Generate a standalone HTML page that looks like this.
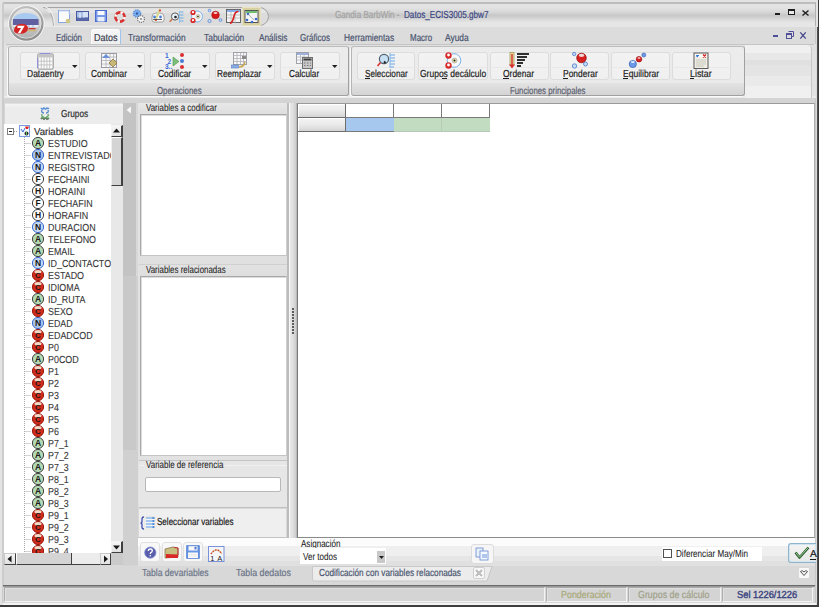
<!DOCTYPE html>
<html><head><meta charset="utf-8">
<style>
*{margin:0;padding:0;box-sizing:border-box}
html,body{width:819px;height:607px;overflow:hidden;background:#d4d4d4;font-family:"Liberation Sans",sans-serif;font-size:9px;color:#000}
.a{position:absolute}
.t{position:absolute;white-space:nowrap;line-height:1;transform-origin:0 0;text-rendering:geometricPrecision;-webkit-text-stroke:0.2px currentColor}
svg{position:absolute;overflow:visible}
</style></head><body>
<div class="a" style="left:0px;top:0px;width:819px;height:607px;background:#e3e3e3"></div>
<div class="a" style="left:3px;top:3px;width:813px;height:602px;background:#d4d4d4"></div>
<div class="a" style="left:3px;top:2px;width:813px;height:2px;background:#bdbdbd"></div>
<div class="a" style="left:2px;top:3px;width:2px;height:600px;background:#cccccc"></div>
<div class="a" style="left:4px;top:4px;width:811px;height:23px;background:linear-gradient(#e4e4e4 0,#e2e2e2 4px,#d8d8d8 8px,#cdcdcd 10px,#c8c8c8 11.5px,#d0d0d0 13.5px,#dcdcdc 16px,#e6e6e6 19px,#e6e6e6 23px)"></div>
<div class="a" style="left:815px;top:3px;width:1px;height:23px;background:#b0b0b0"></div>
<div class="a" style="left:4px;top:27px;width:811px;height:19px;background:#dcdcdc"></div>
<div class="a" style="left:818px;top:0px;width:1px;height:607px;background:#3c3c3c"></div>
<div class="a" style="left:817px;top:27px;width:1px;height:580px;background:#505050"></div>
<div class="a" style="left:815px;top:27px;width:2px;height:578px;background:linear-gradient(90deg,#c8c8c8 50%,#dadada 50%)"></div>
<div class="a" style="left:0px;top:605px;width:819px;height:2px;background:#3c3c3c"></div>
<div class="a" style="left:3px;top:603px;width:813px;height:2px;background:#f4f4f4"></div>
<svg style="left:0;top:0" width="300" height="30"><path d="M43.5 7.5 H259.5 A9 9 0 0 1 259.5 25.5 H53.5 A10 18 0 0 0 43.5 7.5 Z" fill="#dcdcdc"/><path d="M53.5 25.5 A10 18 0 0 0 43.5 7.5 H259.5 A9 9 0 0 1 259.5 25.5" fill="none" stroke="#a4a4a4" stroke-width="1"/><path d="M45 8.5 H259.5 A8 8 0 0 1 266.5 13 H49Z" fill="#e4e4e4"/><path d="M44.5 6.5 A11 19 0 0 1 54.5 25" stroke="#f4f4f4" fill="none" stroke-width="1"/><path d="M54 26.5 H260" stroke="#ececec" stroke-width="1"/></svg>
<svg style="left:7px;top:4px" width="40" height="40" viewBox="0 0 40 40">
<defs><linearGradient id="lg1" x1="0" y1="0" x2="0.3" y2="1"><stop offset="0" stop-color="#c8c8c8"/><stop offset="0.5" stop-color="#a8a8a8"/><stop offset="1" stop-color="#8e8e8e"/></linearGradient>
<linearGradient id="lg2" x1="0" y1="0" x2="0" y2="1"><stop offset="0" stop-color="#e4e4e4"/><stop offset="0.55" stop-color="#cccccc"/><stop offset="1" stop-color="#b0b0b0"/></linearGradient></defs>
<circle cx="19.3" cy="19.4" r="18.2" fill="#f8f8f8"/>
<circle cx="19.3" cy="19.4" r="17.3" fill="url(#lg1)"/>
<circle cx="19.3" cy="19.4" r="14.8" fill="url(#lg2)" stroke="#f0f0f0" stroke-width="0.7"/>
<path d="M6.2 15 Q8 9.5 19 9 Q30 9.5 31.5 15Z" fill="#a8caf0"/>
<rect x="6" y="15" width="25.6" height="6" fill="#6060a0"/>
<rect x="6.5" y="21" width="25" height="2.2" fill="#e4ecf4"/>
<circle cx="22" cy="22" r="0.6" fill="#4a6ad0"/><circle cx="26" cy="22" r="0.6" fill="#4a6ad0"/>
<path d="M7 26 Q8 20 15 19.8 Q21.5 20 21 25 Q20 29.8 13 29.8 Q6.5 29.5 7 26Z" fill="#d42424"/>
<path d="M10.5 21.8h7.2l-4.4 7.4h-2.6l3.4-5.2h-3.6z" fill="#fff"/>
<rect x="21.5" y="24" width="7" height="1.3" fill="#d03030"/><rect x="21" y="26" width="8" height="1.3" fill="#c8b870"/>
</svg>
<svg style="left:57px;top:9px" width="16" height="16" viewBox="0 0 16 16"><rect x="1.5" y="1.5" width="11" height="12" fill="#fafafa" stroke="#8aa8e0"/><path d="M2 2h10v3" stroke="#c8d8f0" fill="none"/><circle cx="11" cy="12" r="2.3" fill="#d0c880"/></svg>
<svg style="left:76px;top:10px" width="16" height="16" viewBox="0 0 16 16"><rect x="0.5" y="1.5" width="12" height="9" fill="#a8c0e8" stroke="#4a5aa0"/><rect x="1" y="7.5" width="11" height="3" fill="#5a6aa8"/><path d="M4 3v5M8 3.5v4" stroke="#f0f4fc" stroke-width="1.2"/><rect x="7" y="2" width="5" height="5" fill="#d8e4f4"/></svg>
<svg style="left:95px;top:10px" width="16" height="16" viewBox="0 0 16 16"><rect x="0.5" y="0.5" width="11" height="11" fill="#7a9ae8" stroke="#4a6ad0"/><rect x="2.5" y="1" width="7" height="4" fill="#fafafa"/><rect x="2.5" y="7" width="7" height="4.5" fill="#e8eef8"/></svg>
<svg style="left:112px;top:9px" width="16" height="16" viewBox="0 0 16 16"><circle cx="8" cy="8" r="4.6" fill="none" stroke="#d83030" stroke-width="2.6"/><circle cx="8" cy="8" r="4.6" fill="none" stroke="#fafafa" stroke-width="2.6" stroke-dasharray="2.4 4.8"/></svg>
<svg style="left:131px;top:8px" width="16" height="16" viewBox="0 0 16 16"><circle cx="6" cy="5.5" r="3.6" fill="#7ab0ec" stroke="#5a8ad8" stroke-width="1.4" stroke-dasharray="1.2 0.9"/><circle cx="6" cy="5.5" r="1.2" fill="#3a5ab0"/><circle cx="10" cy="11" r="3.4" fill="#f4f4f4" stroke="#707070" stroke-width="1.2" stroke-dasharray="1.2 0.9"/><circle cx="10" cy="11" r="1" fill="#888"/></svg>
<svg style="left:150px;top:8px" width="16" height="16" viewBox="0 0 16 16"><path d="M2 9 q0-4 4-4 h4 q4 0 4 4 v3 q0 2-2 2 h-8 q-2 0-2-2z" fill="#f8f8f8" stroke="#909090" stroke-width="0.8"/><path d="M10 1 L5 13" stroke="#d8d890" stroke-width="2"/><circle cx="4.5" cy="9" r="1.4" fill="#4a80d8"/><circle cx="10.5" cy="9" r="1.4" fill="#4a80d8"/><circle cx="10" cy="2.5" r="0.9" fill="#d82020"/><circle cx="6" cy="12" r="0.9" fill="#d82020"/><path d="M3 11.5h9" stroke="#555" stroke-width="0.9"/></svg>
<svg style="left:169px;top:8px" width="16" height="16" viewBox="0 0 16 16"><circle cx="6" cy="8.5" r="3.6" fill="#e8f0f8" stroke="#606060" stroke-width="1"/><circle cx="6.5" cy="9" r="1.3" fill="#222"/><path d="M3.2 11.2l-2.6 2.6" stroke="#c87040" stroke-width="1.4"/><path d="M10.5 3v12" stroke="#8ac0ec" stroke-width="0.8"/><path d="M10.5 4h4M10.5 7h4M10.5 10h4M10.5 13h4" stroke="#6ab0ec" stroke-width="1.1"/></svg>
<svg style="left:188px;top:8px" width="16" height="16" viewBox="0 0 16 16"><circle cx="9" cy="8.5" r="5.5" fill="#f6f6f6" stroke="#7ab4ec" stroke-width="1"/><circle cx="10" cy="8.5" r="2" fill="#e8e0b8" stroke="#999" stroke-width="0.5"/><circle cx="10" cy="8.5" r="0.8" fill="#222"/><circle cx="5" cy="4.5" r="2.6" fill="#d82828"/><circle cx="5" cy="4.2" r="1.1" fill="#fff"/><circle cx="5" cy="12.5" r="2.6" fill="#d82828"/><circle cx="5" cy="12.2" r="1.1" fill="#fff"/></svg>
<svg style="left:206px;top:8px" width="16" height="16" viewBox="0 0 16 16"><circle cx="9.5" cy="7" r="3.8" fill="#d81818" stroke="#a01010" stroke-width="0.6"/><ellipse cx="9.5" cy="5" rx="2" ry="1" fill="#f4d0d0"/><circle cx="3.5" cy="2.5" r="1.3" fill="#c8dcf4" stroke="#4a7ad0" stroke-width="0.7"/><circle cx="3.5" cy="13" r="1.6" fill="#c8dcf4" stroke="#4a7ad0" stroke-width="0.7"/><circle cx="14.5" cy="12" r="1.4" fill="#c8dcf4" stroke="#4a7ad0" stroke-width="0.7"/></svg>
<svg style="left:226px;top:9px" width="16" height="16" viewBox="0 0 16 16"><rect x="0.5" y="0.5" width="14" height="13" fill="#f4f4f4" stroke="#5a5a5a" stroke-width="0.9"/><rect x="1" y="1" width="13" height="2" fill="#8ab0e8"/><path d="M1 6h13M1 9h13M5 3v11M9 3v11" stroke="#b0b0b0" stroke-width="0.7"/><path d="M4 14.5 Q7 13 8 7 Q9 2.5 12.5 2.5" stroke="#d82020" fill="none" stroke-width="1.6"/></svg>
<div class="a" style="left:242px;top:7px;width:19px;height:19px;background:#d6d0a2;border:1px solid #e8e2c0"></div>
<svg style="left:244px;top:9px" width="16" height="16" viewBox="0 0 16 16"><rect x="1" y="1.5" width="13" height="12" fill="#f4f4f4" stroke="#555"/><rect x="2" y="2" width="11" height="2" fill="#70c070"/><circle cx="4" cy="5" r="1.3" fill="#3a6ad0"/><circle cx="3" cy="11" r="1.3" fill="#3a6ad0"/><circle cx="8" cy="13" r="1.3" fill="#3a6ad0"/><circle cx="12" cy="10" r="1.3" fill="#3a6ad0"/><path d="M4 5l6 6" stroke="#888" stroke-width="0.6"/></svg>
<div class="t" style="left:335.00px;top:11px;font-size:10.2px;color:#a2a2a2;transform:scaleX(0.7963);">Gandia BarbWin -</div>
<div class="t" style="left:403.50px;top:11px;font-size:10.2px;color:#3a4684;transform:scaleX(0.7972);">Datos_ECIS3005.gbw7</div>
<div class="a" style="left:775px;top:13px;width:5px;height:2px;background:#1e1e1e"></div>
<div class="a" style="left:788px;top:9px;width:7px;height:6px;border:1px solid #1e1e1e;border-top-width:2px;background:#e8e8e8"></div>
<svg style="left:802px;top:9.5px" width="7" height="6"><path d="M0.5 0.5l6 5M6.5 0.5l-6 5" stroke="#1e1e1e" stroke-width="1.4"/></svg>
<div class="a" style="left:773px;top:35px;width:5px;height:2px;background:#50509a"></div>
<svg style="left:785.5px;top:31px" width="8" height="8"><path d="M2.5 0.5h5v5h-2" fill="none" stroke="#50509a" stroke-width="1"/><rect x="0.5" y="2.5" width="5" height="5" fill="none" stroke="#50509a" stroke-width="1"/><rect x="0.5" y="2.5" width="5" height="1.5" fill="#50509a"/></svg>
<svg style="left:800px;top:31.5px" width="6" height="7"><path d="M0.3 0.3l5.4 6.4M5.7 0.3l-5.4 6.4" stroke="#40408a" stroke-width="1.2"/></svg>
<div class="a" style="left:90px;top:28px;width:31px;height:18px;background:linear-gradient(#f6f6f6,#eeeeee);border:1px solid #d8d8d8;border-bottom:none;border-radius:3px 3px 0 0;border-right-color:#a0c4ec;box-shadow:inset 1px 1px 0 #fcfcfc"></div>
<div class="t" style="left:55.90px;top:34px;font-size:10.2px;color:#4a5470;transform:scaleX(0.7791);">Edición</div>
<div class="t" style="left:94.20px;top:34px;font-size:10.2px;color:#3a4050;transform:scaleX(0.8826);">Datos</div>
<div class="t" style="left:128.40px;top:34px;font-size:10.2px;color:#4a5470;transform:scaleX(0.8170);">Transformación</div>
<div class="t" style="left:203.50px;top:34px;font-size:10.2px;color:#4a5470;transform:scaleX(0.8267);">Tabulación</div>
<div class="t" style="left:258.50px;top:34px;font-size:10.2px;color:#4a5470;transform:scaleX(0.8114);">Análisis</div>
<div class="t" style="left:300.00px;top:34px;font-size:10.2px;color:#4a5470;transform:scaleX(0.7895);">Gráficos</div>
<div class="t" style="left:343.80px;top:34px;font-size:10.2px;color:#4a5470;transform:scaleX(0.8196);">Herramientas</div>
<div class="t" style="left:409.80px;top:34px;font-size:10.2px;color:#4a5470;transform:scaleX(0.7824);">Macro</div>
<div class="t" style="left:444.60px;top:34px;font-size:10.2px;color:#4a5470;transform:scaleX(0.8242);">Ayuda</div>
<div class="a" style="left:4px;top:44px;width:812px;height:54px;background:#e2e2e2"></div>
<div class="a" style="left:6px;top:44px;width:808px;height:1px;background:#c4c4c4"></div>
<div class="a" style="left:4px;top:96px;width:812px;height:2px;background:#ebebeb"></div>
<div class="a" style="left:8px;top:46px;width:341px;height:50px;border:1px solid #a0a0a0;border-top-color:#bcbcbc;border-left-color:#b4b4b4;border-radius:3px;background:linear-gradient(#ececec 0,#eaeaea 74%,#e2e2e2 76%,#d4d4d4 100%);box-shadow:-1px 1px 0 #fafafa"></div>
<div class="t" style="left:156.60px;top:87px;font-size:10.2px;color:#5a6070;transform:scaleX(0.7724);">Operaciones</div>
<div class="a" style="left:351px;top:46px;width:394px;height:50px;border:1px solid #a0a0a0;border-top-color:#bcbcbc;border-left-color:#b4b4b4;border-radius:3px;background:linear-gradient(#ececec 0,#eaeaea 74%,#e2e2e2 76%,#d4d4d4 100%);box-shadow:-1px 1px 0 #fafafa"></div>
<div class="t" style="left:510.40px;top:87px;font-size:10.2px;color:#5a6070;transform:scaleX(0.7665);">Funciones principales</div>
<div class="a" style="left:745px;top:45px;width:67px;height:53px;background:linear-gradient(#f0f0f0 0,#f0f0f0 8px,#e8e8e8 8px,#e8e8e8 15px,#e0e0e0 15px,#e0e0e0 20px,#e4e4e4 20px,#e4e4e4 31.5px,#eaeaea 31.5px,#eaeaea 41px,#f0f0f0 41px);border-right:1px solid #c8c8c8;border-radius:0 4px 0 0"></div>
<div class="a" style="left:20px;top:52px;width:60px;height:28px;background:linear-gradient(#f2f2f2,#f0f0f0);border:1px solid #dcdcdc;border-radius:3px"></div>
<div class="a" style="left:22px;top:67px;width:56px;height:1px;background:#e8e8e8"></div>
<div class="t" style="left:26.60px;top:70px;font-size:10.2px;color:#1e1e1e;transform:scaleX(0.8339);">Dataentry</div>
<svg style="left:72px;top:65px" width="6" height="4"><path d="M0 0h5.5l-2.75 3z" fill="#202020"/></svg>
<div class="a" style="left:85px;top:52px;width:60px;height:28px;background:linear-gradient(#f2f2f2,#f0f0f0);border:1px solid #dcdcdc;border-radius:3px"></div>
<div class="a" style="left:87px;top:67px;width:56px;height:1px;background:#e8e8e8"></div>
<div class="t" style="left:91.00px;top:70px;font-size:10.2px;color:#1e1e1e;transform:scaleX(0.8136);">Combinar</div>
<svg style="left:137px;top:65px" width="6" height="4"><path d="M0 0h5.5l-2.75 3z" fill="#202020"/></svg>
<div class="a" style="left:150px;top:52px;width:60px;height:28px;background:linear-gradient(#f2f2f2,#f0f0f0);border:1px solid #dcdcdc;border-radius:3px"></div>
<div class="a" style="left:152px;top:67px;width:56px;height:1px;background:#e8e8e8"></div>
<div class="t" style="left:157.80px;top:70px;font-size:10.2px;color:#1e1e1e;transform:scaleX(0.8248);">Codificar</div>
<svg style="left:202px;top:65px" width="6" height="4"><path d="M0 0h5.5l-2.75 3z" fill="#202020"/></svg>
<div class="a" style="left:215px;top:52px;width:60px;height:28px;background:linear-gradient(#f2f2f2,#f0f0f0);border:1px solid #dcdcdc;border-radius:3px"></div>
<div class="a" style="left:217px;top:67px;width:56px;height:1px;background:#e8e8e8"></div>
<div class="t" style="left:216.60px;top:70px;font-size:10.2px;color:#1e1e1e;transform:scaleX(0.8073);">Reemplazar</div>
<svg style="left:267px;top:65px" width="6" height="4"><path d="M0 0h5.5l-2.75 3z" fill="#202020"/></svg>
<div class="a" style="left:280px;top:52px;width:60px;height:28px;background:linear-gradient(#f2f2f2,#f0f0f0);border:1px solid #dcdcdc;border-radius:3px"></div>
<div class="a" style="left:282px;top:67px;width:56px;height:1px;background:#e8e8e8"></div>
<div class="t" style="left:288.80px;top:70px;font-size:10.2px;color:#1e1e1e;transform:scaleX(0.8080);">Calcular</div>
<svg style="left:332px;top:65px" width="6" height="4"><path d="M0 0h5.5l-2.75 3z" fill="#202020"/></svg>
<div class="a" style="left:357px;top:52px;width:58px;height:28px;background:linear-gradient(#f2f2f2,#f0f0f0);border:1px solid #dcdcdc;border-radius:3px"></div>
<div class="a" style="left:359px;top:67px;width:54px;height:1px;background:#e8e8e8"></div>
<div class="t" style="left:365.30px;top:70px;font-size:10.2px;color:#1e1e1e;transform:scaleX(0.8019);">Seleccionar</div>
<div class="a" style="left:365px;top:78px;width:5px;height:1px;background:#1e1e1e"></div>
<div class="a" style="left:418px;top:52px;width:70px;height:28px;background:linear-gradient(#f2f2f2,#f0f0f0);border:1px solid #dcdcdc;border-radius:3px"></div>
<div class="a" style="left:420px;top:67px;width:66px;height:1px;background:#e8e8e8"></div>
<div class="t" style="left:419.60px;top:70px;font-size:10.2px;color:#1e1e1e;transform:scaleX(0.8340);">Grupos decálculo</div>
<div class="a" style="left:442px;top:78px;width:5px;height:1px;background:#1e1e1e"></div>
<div class="a" style="left:490px;top:52px;width:59px;height:28px;background:linear-gradient(#f2f2f2,#f0f0f0);border:1px solid #dcdcdc;border-radius:3px"></div>
<div class="a" style="left:492px;top:67px;width:55px;height:1px;background:#e8e8e8"></div>
<div class="t" style="left:503.00px;top:70px;font-size:10.2px;color:#1e1e1e;transform:scaleX(0.8294);">Ordenar</div>
<div class="a" style="left:503px;top:78px;width:6px;height:1px;background:#1e1e1e"></div>
<div class="a" style="left:550px;top:52px;width:59px;height:28px;background:linear-gradient(#f2f2f2,#f0f0f0);border:1px solid #dcdcdc;border-radius:3px"></div>
<div class="a" style="left:552px;top:67px;width:55px;height:1px;background:#e8e8e8"></div>
<div class="t" style="left:562.60px;top:70px;font-size:10.2px;color:#1e1e1e;transform:scaleX(0.8310);">Ponderar</div>
<div class="a" style="left:562.5px;top:78px;width:5px;height:1px;background:#1e1e1e"></div>
<div class="a" style="left:611px;top:52px;width:59px;height:28px;background:linear-gradient(#f2f2f2,#f0f0f0);border:1px solid #dcdcdc;border-radius:3px"></div>
<div class="a" style="left:613px;top:67px;width:55px;height:1px;background:#e8e8e8"></div>
<div class="t" style="left:622.80px;top:70px;font-size:10.2px;color:#1e1e1e;transform:scaleX(0.8394);">Equilibrar</div>
<div class="a" style="left:622.5px;top:78px;width:5px;height:1px;background:#1e1e1e"></div>
<div class="a" style="left:672px;top:52px;width:59px;height:28px;background:linear-gradient(#f2f2f2,#f0f0f0);border:1px solid #dcdcdc;border-radius:3px"></div>
<div class="a" style="left:674px;top:67px;width:55px;height:1px;background:#e8e8e8"></div>
<div class="t" style="left:690.00px;top:70px;font-size:10.2px;color:#1e1e1e;transform:scaleX(0.8680);">Listar</div>
<div class="a" style="left:690px;top:78px;width:4px;height:1px;background:#1e1e1e"></div>
<svg style="left:36.5px;top:53px" width="17" height="17" viewBox="0 0 17 17"><rect x="0.8" y="0.8" width="15.4" height="15.4" rx="1.5" fill="#fdfdfd" stroke="#a4a4a4" stroke-width="1.3"/><path d="M3 0.6h10" stroke="#8c8ce0" stroke-width="1"/><path d="M0.7 5v10" stroke="#8c8ce0" stroke-width="1"/><rect x="1.5" y="1.5" width="14" height="3" fill="#c4c4c4"/><path d="M4.3 4.5v11" stroke="#c0c0c0" stroke-width="0.9"/><path d="M7.1 4.5v11" stroke="#c0c0c0" stroke-width="0.9"/><path d="M9.899999999999999 4.5v11" stroke="#c0c0c0" stroke-width="0.9"/><path d="M12.7 4.5v11" stroke="#c0c0c0" stroke-width="0.9"/><path d="M1.5 8.2h14" stroke="#c0c0c0" stroke-width="0.9"/><path d="M1.5 11.9h14" stroke="#c0c0c0" stroke-width="0.9"/></svg>
<svg style="left:101px;top:53px" width="17" height="15" viewBox="0 0 17 15"><rect x="0.5" y="0.5" width="15" height="14" fill="#f8f8f8" stroke="#9a9aa4"/><path d="M1 4h14M1 7.5h14M1 11h14M5 1v13M9 1v13M12.5 1v13" stroke="#b0b0b8" stroke-width="0.8"/><path d="M1 5 L5 1 L9 5z" fill="#6a90d8"/><path d="M8 10 l4-4 l4 4 l-4 4z" fill="#c8b878" stroke="#907840" stroke-width="0.8"/></svg>
<svg style="left:165px;top:52px" width="20" height="17" viewBox="0 0 20 17"><text x="0" y="6" font-family="Liberation Sans" font-weight="bold" font-size="6.5" fill="#3a6ad8">1</text><text x="2.5" y="11.5" font-family="Liberation Sans" font-weight="bold" font-size="6.5" fill="#3a6ad8">2</text><text x="0" y="17" font-family="Liberation Sans" font-weight="bold" font-size="6.5" fill="#3a6ad8">3..</text><path d="M8 5 l6 4.5 l-6 4.5z" fill="#7ac07a" stroke="#4a904a" stroke-width="0.6"/><circle cx="17" cy="3" r="2" fill="#d83030"/><circle cx="17" cy="9" r="2" fill="#4a7ad8"/><circle cx="17" cy="15" r="2" fill="#d83030"/></svg>
<svg style="left:231px;top:52px" width="16" height="17" viewBox="0 0 16 17"><rect x="2.5" y="0.5" width="13" height="12" fill="#f8f8f8" stroke="#a0a0a8"/><path d="M3 3.5h12M3 6.5h12M3 9.5h12M6 1v11M9.5 1v11M12.5 1v11" stroke="#b0b0b8" stroke-width="0.8"/><rect x="11" y="4" width="4" height="3" fill="#888"/><rect x="0.5" y="13" width="7" height="3" fill="#8ab0e8" stroke="#5a7ac0" stroke-width="0.6"/><path d="M8 15 q5 0 6-5" stroke="#c8a850" fill="none" stroke-width="1.5"/></svg>
<svg style="left:296px;top:52px" width="17" height="17" viewBox="0 0 17 17"><rect x="0.5" y="0.5" width="12" height="11" fill="#f8f8f8" stroke="#a0a0a8"/><rect x="1" y="1" width="11" height="2" fill="#9ab0e0"/><path d="M1 5h11M1 8h11M4.5 1v11M8 1v11" stroke="#b8b8c0" stroke-width="0.8"/><rect x="6.5" y="5.5" width="10" height="11" fill="#c8c8c8" stroke="#707070"/><rect x="7.5" y="6.5" width="8" height="2" fill="#404040"/><path d="M8 11h1.5M11 11h1.5M14 11h1M8 13.5h1.5M11 13.5h1.5M14 13.5h1" stroke="#777" stroke-width="1"/></svg>
<svg style="left:377px;top:52px" width="19" height="17" viewBox="0 0 19 17"><circle cx="7" cy="7" r="4.6" fill="#c8e0f4" stroke="#506070" stroke-width="1.2"/><path d="M3.5 10.5 L0.5 14" stroke="#d83030" stroke-width="1.6"/><path d="M7 9.5l1.5 1.5" stroke="#222" stroke-width="1.8"/><path d="M13 1v15" stroke="#80b8e8" stroke-width="1"/><path d="M13 3h5M13 6h5M13 9h5M13 12h5M13 15h4" stroke="#6aa8e8" stroke-width="1"/></svg>
<svg style="left:444px;top:52px" width="18" height="17" viewBox="0 0 18 17"><circle cx="10" cy="8.5" r="6.8" fill="#fafafa" stroke="#7ab0e8" stroke-width="1"/><circle cx="10.5" cy="8.5" r="2.5" fill="#e8e0b0" stroke="#999" stroke-width="0.6"/><circle cx="10.5" cy="8.5" r="1" fill="#222"/><circle cx="4.5" cy="3.5" r="3.2" fill="#d82828"/><circle cx="4.5" cy="3" r="1.4" fill="#fff"/><circle cx="4.5" cy="13.5" r="3.2" fill="#d82828"/><circle cx="4.5" cy="13" r="1.4" fill="#fff"/></svg>
<svg style="left:509px;top:52px" width="21" height="18" viewBox="0 0 21 18"><rect x="1" y="0.5" width="4" height="13" fill="#e8e0a0" stroke="#a09050" stroke-width="0.7"/><path d="M3 2v13" stroke="#d83030" stroke-width="1.4"/><path d="M0 12.5 l3 4 l3-4z" fill="#d83030"/><path d="M8 2h12M8 5h10M8 8h8M8 11h6M8 14h4" stroke="#303030" stroke-width="1.8"/></svg>
<svg style="left:572px;top:52px" width="16" height="17" viewBox="0 0 16 17"><circle cx="9.5" cy="6" r="4.8" fill="#d82020" stroke="#8a1010" stroke-width="0.7"/><ellipse cx="9.5" cy="3.3" rx="2.8" ry="1.6" fill="#f4d8d8"/><circle cx="2.2" cy="2" r="1.7" fill="#c8dcf4" stroke="#4a7ad0" stroke-width="0.8"/><circle cx="2.5" cy="14" r="2.2" fill="#c8dcf4" stroke="#4a7ad0" stroke-width="0.8"/><circle cx="13.5" cy="12" r="2" fill="#c8dcf4" stroke="#4a7ad0" stroke-width="0.8"/></svg>
<svg style="left:628px;top:52px" width="20" height="17" viewBox="0 0 20 17"><circle cx="4.8" cy="12" r="3.6" fill="#6a9ae8" stroke="#3a5ab0" stroke-width="0.7"/><ellipse cx="4.8" cy="10" rx="2" ry="1" fill="#e0ecfc"/><circle cx="11" cy="7.2" r="2.8" fill="#d82020" stroke="#901010" stroke-width="0.6"/><ellipse cx="11" cy="6" rx="1.5" ry="0.8" fill="#f8e0e0"/><circle cx="15.8" cy="3" r="2" fill="#6a9ae8" stroke="#3a5ab0" stroke-width="0.6"/></svg>
<svg style="left:693px;top:52px" width="17" height="18" viewBox="0 0 17 18"><rect x="1" y="1" width="14" height="15.5" fill="#f0eee4" stroke="#5a5a5a" stroke-width="1"/><rect x="2" y="2" width="12" height="3" fill="#fafafa"/><path d="M3 3.5l2 1.5M3 3.5h3" stroke="#3a7ad8" stroke-width="1.2"/><path d="M10 2.5l3 3M13 2.5l-3 3" stroke="#d82020" stroke-width="1.3"/><path d="M3 8h10M3 10h10M3 12h10M3 14h8" stroke="#c8c8c0" stroke-width="1"/></svg>
<div class="a" style="left:4px;top:103px;width:119px;height:462px;background:#d4d4d4"></div>
<div class="a" style="left:5px;top:103px;width:118px;height:21px;background:linear-gradient(#f4f4f4,#ececec 20%,#ececec);border-top:1px solid #e0e0e0"></div>
<svg style="left:40px;top:107px" width="10" height="14" viewBox="0 0 10 14"><path d="M1 1 q1.5 2 3 0 q1.5 2 3 0 q1 1 2 0" stroke="#5a90d8" fill="none" stroke-width="1.4"/><path d="M2 3 q-1 3 2 3 M8 3 q1 3 -2 3" stroke="#4a80c8" fill="none" stroke-width="1.3"/><path d="M2 7 q-1 3 2 3 M8 7 q1 3 -2 3" stroke="#60a860" fill="none" stroke-width="1.3"/><path d="M1 12 q1.5 -2 3 0 q1.5 -2 3 0 q1 -1 2 0" stroke="#404040" fill="none" stroke-width="1.6"/><path d="M1 11 h8" stroke="#70b870" stroke-width="1.2"/></svg>
<div class="t" style="left:61.20px;top:110px;font-size:10.2px;color:#303030;transform:scaleX(0.8149);">Grupos</div>
<div class="a" style="left:4px;top:124px;width:107px;height:429px;background:#fff"></div>
<div class="a" style="left:24px;top:137px;width:1px;height:416px;background-image:linear-gradient(#a8a8a8 50%,transparent 50%);background-size:1px 2px"></div>
<div class="a" style="left:14px;top:131px;width:4px;height:1px;background-image:linear-gradient(90deg,#a0a0a0 50%,transparent 50%);background-size:2px 1px"></div>
<div class="a" style="left:7px;top:128px;width:7px;height:7px;border:1px solid #808080;background:#fff"></div>
<div class="a" style="left:9px;top:131px;width:3px;height:1px;background:#202020"></div>
<svg style="left:19px;top:125px" width="11" height="12" viewBox="0 0 11 12"><rect x="0.5" y="0.5" width="10" height="11" fill="#f4f8ff" stroke="#7a9ae0"/><path d="M2 4l2 3 2-4" stroke="#3a6ad0" fill="none"/><path d="M6 1.5h4l-1 2.5h-2z" fill="#e02020"/><circle cx="7.5" cy="8.5" r="2" fill="#303030"/><path d="M7.5 6.5v4" stroke="#60c060"/></svg>
<div class="t" style="left:34.30px;top:128px;font-size:10.2px;color:#303030;transform:scaleX(0.9413);">Variables</div>
<svg style="left:0;top:0;clip-path:inset(124px 708px 54px 4px)" width="819" height="607"><path d="M25.5 143.5h6" stroke="#a8a8a8" stroke-dasharray="1 1"/><circle cx="38" cy="143" r="5.6" fill="#b4dab4" stroke="#404040" stroke-width="1"/><text x="38" y="146.2" font-family="Liberation Sans" font-weight="bold" font-size="8.5" text-anchor="middle" fill="#181818">A</text><path d="M25.5 155.5h6" stroke="#a8a8a8" stroke-dasharray="1 1"/><circle cx="38" cy="155" r="5.6" fill="#a8c4ec" stroke="#3a6ad0" stroke-width="1"/><text x="38" y="158.2" font-family="Liberation Sans" font-weight="bold" font-size="8.5" text-anchor="middle" fill="#181818">N</text><path d="M25.5 167.5h6" stroke="#a8a8a8" stroke-dasharray="1 1"/><circle cx="38" cy="167" r="5.6" fill="#c4d8f4" stroke="#3a6ad0" stroke-width="1"/><text x="38" y="170.2" font-family="Liberation Sans" font-weight="bold" font-size="8.5" text-anchor="middle" fill="#181818">N</text><path d="M25.5 179.5h6" stroke="#a8a8a8" stroke-dasharray="1 1"/><circle cx="38" cy="179" r="5.6" fill="#fcfcfc" stroke="#404040" stroke-width="1"/><text x="38" y="182.2" font-family="Liberation Sans" font-weight="bold" font-size="8.5" text-anchor="middle" fill="#181818">F</text><path d="M25.5 191.5h6" stroke="#a8a8a8" stroke-dasharray="1 1"/><circle cx="38" cy="191" r="5.6" fill="#fcfcfc" stroke="#404040" stroke-width="1"/><text x="38" y="194.2" font-family="Liberation Sans" font-weight="bold" font-size="8.5" text-anchor="middle" fill="#181818">H</text><path d="M25.5 203.5h6" stroke="#a8a8a8" stroke-dasharray="1 1"/><circle cx="38" cy="203" r="5.6" fill="#fcfcfc" stroke="#404040" stroke-width="1"/><text x="38" y="206.2" font-family="Liberation Sans" font-weight="bold" font-size="8.5" text-anchor="middle" fill="#181818">F</text><path d="M25.5 215.5h6" stroke="#a8a8a8" stroke-dasharray="1 1"/><circle cx="38" cy="215" r="5.6" fill="#fcfcfc" stroke="#404040" stroke-width="1"/><text x="38" y="218.2" font-family="Liberation Sans" font-weight="bold" font-size="8.5" text-anchor="middle" fill="#181818">H</text><path d="M25.5 227.5h6" stroke="#a8a8a8" stroke-dasharray="1 1"/><circle cx="38" cy="227" r="5.6" fill="#c4d8f4" stroke="#3a6ad0" stroke-width="1"/><text x="38" y="230.2" font-family="Liberation Sans" font-weight="bold" font-size="8.5" text-anchor="middle" fill="#181818">N</text><path d="M25.5 239.5h6" stroke="#a8a8a8" stroke-dasharray="1 1"/><circle cx="38" cy="239" r="5.6" fill="#b4dab4" stroke="#404040" stroke-width="1"/><text x="38" y="242.2" font-family="Liberation Sans" font-weight="bold" font-size="8.5" text-anchor="middle" fill="#181818">A</text><path d="M25.5 251.5h6" stroke="#a8a8a8" stroke-dasharray="1 1"/><circle cx="38" cy="251" r="5.6" fill="#b4dab4" stroke="#404040" stroke-width="1"/><text x="38" y="254.2" font-family="Liberation Sans" font-weight="bold" font-size="8.5" text-anchor="middle" fill="#181818">A</text><path d="M25.5 263.5h6" stroke="#a8a8a8" stroke-dasharray="1 1"/><circle cx="38" cy="263" r="5.6" fill="#c4d8f4" stroke="#3a6ad0" stroke-width="1"/><text x="38" y="266.2" font-family="Liberation Sans" font-weight="bold" font-size="8.5" text-anchor="middle" fill="#181818">N</text><path d="M25.5 275.5h6" stroke="#a8a8a8" stroke-dasharray="1 1"/><circle cx="38" cy="275" r="5.6" fill="#d42c1c" stroke="#9a1a10" stroke-width="1"/><ellipse cx="38" cy="271.8" rx="3.6" ry="1.8" fill="#f4ecdc" opacity="0.9"/><text x="38" y="278.2" font-family="Liberation Sans" font-weight="bold" font-size="8" text-anchor="middle" fill="#181818">C</text><path d="M25.5 287.5h6" stroke="#a8a8a8" stroke-dasharray="1 1"/><circle cx="38" cy="287" r="5.6" fill="#d42c1c" stroke="#9a1a10" stroke-width="1"/><ellipse cx="38" cy="283.8" rx="3.6" ry="1.8" fill="#f4ecdc" opacity="0.9"/><text x="38" y="290.2" font-family="Liberation Sans" font-weight="bold" font-size="8" text-anchor="middle" fill="#181818">C</text><path d="M25.5 299.5h6" stroke="#a8a8a8" stroke-dasharray="1 1"/><circle cx="38" cy="299" r="5.6" fill="#b4dab4" stroke="#404040" stroke-width="1"/><text x="38" y="302.2" font-family="Liberation Sans" font-weight="bold" font-size="8.5" text-anchor="middle" fill="#181818">A</text><path d="M25.5 311.5h6" stroke="#a8a8a8" stroke-dasharray="1 1"/><circle cx="38" cy="311" r="5.6" fill="#d42c1c" stroke="#9a1a10" stroke-width="1"/><ellipse cx="38" cy="307.8" rx="3.6" ry="1.8" fill="#f4ecdc" opacity="0.9"/><text x="38" y="314.2" font-family="Liberation Sans" font-weight="bold" font-size="8" text-anchor="middle" fill="#181818">C</text><path d="M25.5 323.5h6" stroke="#a8a8a8" stroke-dasharray="1 1"/><circle cx="38" cy="323" r="5.6" fill="#a8c4ec" stroke="#3a6ad0" stroke-width="1"/><text x="38" y="326.2" font-family="Liberation Sans" font-weight="bold" font-size="8.5" text-anchor="middle" fill="#181818">N</text><path d="M25.5 335.5h6" stroke="#a8a8a8" stroke-dasharray="1 1"/><circle cx="38" cy="335" r="5.6" fill="#d42c1c" stroke="#9a1a10" stroke-width="1"/><ellipse cx="38" cy="331.8" rx="3.6" ry="1.8" fill="#f4ecdc" opacity="0.9"/><text x="38" y="338.2" font-family="Liberation Sans" font-weight="bold" font-size="8" text-anchor="middle" fill="#181818">C</text><path d="M25.5 347.5h6" stroke="#a8a8a8" stroke-dasharray="1 1"/><circle cx="38" cy="347" r="5.6" fill="#d42c1c" stroke="#9a1a10" stroke-width="1"/><ellipse cx="38" cy="343.8" rx="3.6" ry="1.8" fill="#f4ecdc" opacity="0.9"/><text x="38" y="350.2" font-family="Liberation Sans" font-weight="bold" font-size="8" text-anchor="middle" fill="#181818">C</text><path d="M25.5 359.5h6" stroke="#a8a8a8" stroke-dasharray="1 1"/><circle cx="38" cy="359" r="5.6" fill="#b4dab4" stroke="#404040" stroke-width="1"/><text x="38" y="362.2" font-family="Liberation Sans" font-weight="bold" font-size="8.5" text-anchor="middle" fill="#181818">A</text><path d="M25.5 371.5h6" stroke="#a8a8a8" stroke-dasharray="1 1"/><circle cx="38" cy="371" r="5.6" fill="#d42c1c" stroke="#9a1a10" stroke-width="1"/><ellipse cx="38" cy="367.8" rx="3.6" ry="1.8" fill="#f4ecdc" opacity="0.9"/><text x="38" y="374.2" font-family="Liberation Sans" font-weight="bold" font-size="8" text-anchor="middle" fill="#181818">C</text><path d="M25.5 383.5h6" stroke="#a8a8a8" stroke-dasharray="1 1"/><circle cx="38" cy="383" r="5.6" fill="#d42c1c" stroke="#9a1a10" stroke-width="1"/><ellipse cx="38" cy="379.8" rx="3.6" ry="1.8" fill="#f4ecdc" opacity="0.9"/><text x="38" y="386.2" font-family="Liberation Sans" font-weight="bold" font-size="8" text-anchor="middle" fill="#181818">C</text><path d="M25.5 395.5h6" stroke="#a8a8a8" stroke-dasharray="1 1"/><circle cx="38" cy="395" r="5.6" fill="#d42c1c" stroke="#9a1a10" stroke-width="1"/><ellipse cx="38" cy="391.8" rx="3.6" ry="1.8" fill="#f4ecdc" opacity="0.9"/><text x="38" y="398.2" font-family="Liberation Sans" font-weight="bold" font-size="8" text-anchor="middle" fill="#181818">C</text><path d="M25.5 407.5h6" stroke="#a8a8a8" stroke-dasharray="1 1"/><circle cx="38" cy="407" r="5.6" fill="#d42c1c" stroke="#9a1a10" stroke-width="1"/><ellipse cx="38" cy="403.8" rx="3.6" ry="1.8" fill="#f4ecdc" opacity="0.9"/><text x="38" y="410.2" font-family="Liberation Sans" font-weight="bold" font-size="8" text-anchor="middle" fill="#181818">C</text><path d="M25.5 419.5h6" stroke="#a8a8a8" stroke-dasharray="1 1"/><circle cx="38" cy="419" r="5.6" fill="#d42c1c" stroke="#9a1a10" stroke-width="1"/><ellipse cx="38" cy="415.8" rx="3.6" ry="1.8" fill="#f4ecdc" opacity="0.9"/><text x="38" y="422.2" font-family="Liberation Sans" font-weight="bold" font-size="8" text-anchor="middle" fill="#181818">C</text><path d="M25.5 431.5h6" stroke="#a8a8a8" stroke-dasharray="1 1"/><circle cx="38" cy="431" r="5.6" fill="#d42c1c" stroke="#9a1a10" stroke-width="1"/><ellipse cx="38" cy="427.8" rx="3.6" ry="1.8" fill="#f4ecdc" opacity="0.9"/><text x="38" y="434.2" font-family="Liberation Sans" font-weight="bold" font-size="8" text-anchor="middle" fill="#181818">C</text><path d="M25.5 443.5h6" stroke="#a8a8a8" stroke-dasharray="1 1"/><circle cx="38" cy="443" r="5.6" fill="#b4dab4" stroke="#404040" stroke-width="1"/><text x="38" y="446.2" font-family="Liberation Sans" font-weight="bold" font-size="8.5" text-anchor="middle" fill="#181818">A</text><path d="M25.5 455.5h6" stroke="#a8a8a8" stroke-dasharray="1 1"/><circle cx="38" cy="455" r="5.6" fill="#b4dab4" stroke="#404040" stroke-width="1"/><text x="38" y="458.2" font-family="Liberation Sans" font-weight="bold" font-size="8.5" text-anchor="middle" fill="#181818">A</text><path d="M25.5 467.5h6" stroke="#a8a8a8" stroke-dasharray="1 1"/><circle cx="38" cy="467" r="5.6" fill="#b4dab4" stroke="#404040" stroke-width="1"/><text x="38" y="470.2" font-family="Liberation Sans" font-weight="bold" font-size="8.5" text-anchor="middle" fill="#181818">A</text><path d="M25.5 479.5h6" stroke="#a8a8a8" stroke-dasharray="1 1"/><circle cx="38" cy="479" r="5.6" fill="#b4dab4" stroke="#404040" stroke-width="1"/><text x="38" y="482.2" font-family="Liberation Sans" font-weight="bold" font-size="8.5" text-anchor="middle" fill="#181818">A</text><path d="M25.5 491.5h6" stroke="#a8a8a8" stroke-dasharray="1 1"/><circle cx="38" cy="491" r="5.6" fill="#b4dab4" stroke="#404040" stroke-width="1"/><text x="38" y="494.2" font-family="Liberation Sans" font-weight="bold" font-size="8.5" text-anchor="middle" fill="#181818">A</text><path d="M25.5 503.5h6" stroke="#a8a8a8" stroke-dasharray="1 1"/><circle cx="38" cy="503" r="5.6" fill="#b4dab4" stroke="#404040" stroke-width="1"/><text x="38" y="506.2" font-family="Liberation Sans" font-weight="bold" font-size="8.5" text-anchor="middle" fill="#181818">A</text><path d="M25.5 515.5h6" stroke="#a8a8a8" stroke-dasharray="1 1"/><circle cx="38" cy="515" r="5.6" fill="#d42c1c" stroke="#9a1a10" stroke-width="1"/><ellipse cx="38" cy="511.8" rx="3.6" ry="1.8" fill="#f4ecdc" opacity="0.9"/><text x="38" y="518.2" font-family="Liberation Sans" font-weight="bold" font-size="8" text-anchor="middle" fill="#181818">C</text><path d="M25.5 527.5h6" stroke="#a8a8a8" stroke-dasharray="1 1"/><circle cx="38" cy="527" r="5.6" fill="#d42c1c" stroke="#9a1a10" stroke-width="1"/><ellipse cx="38" cy="523.8" rx="3.6" ry="1.8" fill="#f4ecdc" opacity="0.9"/><text x="38" y="530.2" font-family="Liberation Sans" font-weight="bold" font-size="8" text-anchor="middle" fill="#181818">C</text><path d="M25.5 539.5h6" stroke="#a8a8a8" stroke-dasharray="1 1"/><circle cx="38" cy="539" r="5.6" fill="#d42c1c" stroke="#9a1a10" stroke-width="1"/><ellipse cx="38" cy="535.8" rx="3.6" ry="1.8" fill="#f4ecdc" opacity="0.9"/><text x="38" y="542.2" font-family="Liberation Sans" font-weight="bold" font-size="8" text-anchor="middle" fill="#181818">C</text><path d="M25.5 551.5h6" stroke="#a8a8a8" stroke-dasharray="1 1"/><circle cx="38" cy="551" r="5.6" fill="#d42c1c" stroke="#9a1a10" stroke-width="1"/><ellipse cx="38" cy="547.8" rx="3.6" ry="1.8" fill="#f4ecdc" opacity="0.9"/><text x="38" y="554.2" font-family="Liberation Sans" font-weight="bold" font-size="8" text-anchor="middle" fill="#181818">C</text></svg>
<div class="t" style="left:48.40px;top:140px;font-size:10.2px;color:#383838;transform:scaleX(0.8743);-webkit-text-stroke:0.1px #383838;">ESTUDIO</div>
<div class="t" style="left:48.40px;top:152px;font-size:10.2px;color:#383838;transform:scaleX(0.8746);-webkit-text-stroke:0.1px #383838;">ENTREVISTADOR</div>
<div class="t" style="left:48.40px;top:164px;font-size:10.2px;color:#383838;transform:scaleX(0.8754);-webkit-text-stroke:0.1px #383838;">REGISTRO</div>
<div class="t" style="left:48.40px;top:176px;font-size:10.2px;color:#383838;transform:scaleX(0.8746);-webkit-text-stroke:0.1px #383838;">FECHAINI</div>
<div class="t" style="left:48.40px;top:188px;font-size:10.2px;color:#383838;transform:scaleX(0.8751);-webkit-text-stroke:0.1px #383838;">HORAINI</div>
<div class="t" style="left:48.40px;top:200px;font-size:10.2px;color:#383838;transform:scaleX(0.8751);-webkit-text-stroke:0.1px #383838;">FECHAFIN</div>
<div class="t" style="left:48.40px;top:212px;font-size:10.2px;color:#383838;transform:scaleX(0.8755);-webkit-text-stroke:0.1px #383838;">HORAFIN</div>
<div class="t" style="left:48.40px;top:224px;font-size:10.2px;color:#383838;transform:scaleX(0.8755);-webkit-text-stroke:0.1px #383838;">DURACION</div>
<div class="t" style="left:48.40px;top:236px;font-size:10.2px;color:#383838;transform:scaleX(0.8746);-webkit-text-stroke:0.1px #383838;">TELEFONO</div>
<div class="t" style="left:48.40px;top:248px;font-size:10.2px;color:#383838;transform:scaleX(0.8746);-webkit-text-stroke:0.1px #383838;">EMAIL</div>
<div class="t" style="left:48.40px;top:260px;font-size:10.2px;color:#383838;transform:scaleX(0.8755);-webkit-text-stroke:0.1px #383838;">ID_CONTACTO</div>
<div class="t" style="left:48.40px;top:272px;font-size:10.2px;color:#383838;transform:scaleX(0.8763);-webkit-text-stroke:0.1px #383838;">ESTADO</div>
<div class="t" style="left:48.40px;top:284px;font-size:10.2px;color:#383838;transform:scaleX(0.8724);-webkit-text-stroke:0.1px #383838;">IDIOMA</div>
<div class="t" style="left:48.40px;top:296px;font-size:10.2px;color:#383838;transform:scaleX(0.8726);-webkit-text-stroke:0.1px #383838;">ID_RUTA</div>
<div class="t" style="left:48.40px;top:308px;font-size:10.2px;color:#383838;transform:scaleX(0.8742);-webkit-text-stroke:0.1px #383838;">SEXO</div>
<div class="t" style="left:48.40px;top:320px;font-size:10.2px;color:#383838;transform:scaleX(0.8740);-webkit-text-stroke:0.1px #383838;">EDAD</div>
<div class="t" style="left:48.40px;top:332px;font-size:10.2px;color:#383838;transform:scaleX(0.8752);-webkit-text-stroke:0.1px #383838;">EDADCOD</div>
<div class="t" style="left:48.40px;top:344px;font-size:10.2px;color:#383838;transform:scaleX(0.8734);-webkit-text-stroke:0.1px #383838;">P0</div>
<div class="t" style="left:48.40px;top:356px;font-size:10.2px;color:#383838;transform:scaleX(0.8755);-webkit-text-stroke:0.1px #383838;">P0COD</div>
<div class="t" style="left:48.40px;top:368px;font-size:10.2px;color:#383838;transform:scaleX(0.8734);-webkit-text-stroke:0.1px #383838;">P1</div>
<div class="t" style="left:48.40px;top:380px;font-size:10.2px;color:#383838;transform:scaleX(0.8734);-webkit-text-stroke:0.1px #383838;">P2</div>
<div class="t" style="left:48.40px;top:392px;font-size:10.2px;color:#383838;transform:scaleX(0.8734);-webkit-text-stroke:0.1px #383838;">P3</div>
<div class="t" style="left:48.40px;top:404px;font-size:10.2px;color:#383838;transform:scaleX(0.8734);-webkit-text-stroke:0.1px #383838;">P4</div>
<div class="t" style="left:48.40px;top:416px;font-size:10.2px;color:#383838;transform:scaleX(0.8734);-webkit-text-stroke:0.1px #383838;">P5</div>
<div class="t" style="left:48.40px;top:428px;font-size:10.2px;color:#383838;transform:scaleX(0.8734);-webkit-text-stroke:0.1px #383838;">P6</div>
<div class="t" style="left:48.40px;top:440px;font-size:10.2px;color:#383838;transform:scaleX(0.8730);-webkit-text-stroke:0.1px #383838;">P7_1</div>
<div class="t" style="left:48.40px;top:452px;font-size:10.2px;color:#383838;transform:scaleX(0.8730);-webkit-text-stroke:0.1px #383838;">P7_2</div>
<div class="t" style="left:48.40px;top:464px;font-size:10.2px;color:#383838;transform:scaleX(0.8730);-webkit-text-stroke:0.1px #383838;">P7_3</div>
<div class="t" style="left:48.40px;top:476px;font-size:10.2px;color:#383838;transform:scaleX(0.8730);-webkit-text-stroke:0.1px #383838;">P8_1</div>
<div class="t" style="left:48.40px;top:488px;font-size:10.2px;color:#383838;transform:scaleX(0.8730);-webkit-text-stroke:0.1px #383838;">P8_2</div>
<div class="t" style="left:48.40px;top:500px;font-size:10.2px;color:#383838;transform:scaleX(0.8730);-webkit-text-stroke:0.1px #383838;">P8_3</div>
<div class="t" style="left:48.40px;top:512px;font-size:10.2px;color:#383838;transform:scaleX(0.8730);-webkit-text-stroke:0.1px #383838;">P9_1</div>
<div class="t" style="left:48.40px;top:524px;font-size:10.2px;color:#383838;transform:scaleX(0.8730);-webkit-text-stroke:0.1px #383838;">P9_2</div>
<div class="t" style="left:48.40px;top:536px;font-size:10.2px;color:#383838;transform:scaleX(0.8730);-webkit-text-stroke:0.1px #383838;">P9_3</div>
<div class="t" style="left:48.40px;top:548px;font-size:10.2px;color:#383838;transform:scaleX(0.8730);-webkit-text-stroke:0.1px #383838;">P9_4</div>
<div class="a" style="left:111px;top:124px;width:12px;height:429px;background:#e8e8e8"></div>
<div class="a" style="left:111px;top:125px;width:12px;height:12px;background:linear-gradient(#f6f6f6,#e0e0e0);border:1px solid #f4f4f4;border-right:2px solid #404040;border-bottom:1px solid #404040"></div>
<svg style="left:113px;top:128px" width="8" height="5"><path d="M0 4.5h7l-3.5-4z" fill="#181818"/></svg>
<div class="a" style="left:111px;top:137px;width:12px;height:49px;background:#d4d4d4;border-top:1px solid #fff;border-bottom:1px solid #404040;border-left:1px solid #f0f0f0;border-right:2px solid #404040"></div>
<div class="a" style="left:111px;top:541px;width:12px;height:12px;background:linear-gradient(#f6f6f6,#e0e0e0);border:1px solid #f4f4f4;border-right:2px solid #404040;border-bottom:1px solid #404040"></div>
<svg style="left:113px;top:545px" width="8" height="5"><path d="M0 0.5h7l-3.5 4z" fill="#181818"/></svg>
<div class="a" style="left:4px;top:553px;width:107px;height:12px;background:#ececec;border-bottom:1px solid #404040"></div>
<div class="a" style="left:4px;top:553px;width:12px;height:12px;background:linear-gradient(#f6f6f6,#e0e0e0);border:1px solid #c8c8c8;border-right-color:#404040;border-bottom-color:#404040"></div>
<svg style="left:7px;top:555px" width="6" height="8"><path d="M4.5 0.5v7l-4-3.5z" fill="#181818"/></svg>
<div class="a" style="left:16px;top:553px;width:56px;height:12px;background:#d4d4d4;border-left:1px solid #fff;border-right:1px solid #404040;border-bottom:1px solid #404040"></div>
<div class="a" style="left:100px;top:553px;width:11px;height:12px;background:linear-gradient(#f6f6f6,#e0e0e0);border:1px solid #c8c8c8;border-right-color:#404040;border-bottom-color:#404040"></div>
<svg style="left:103px;top:555px" width="6" height="8"><path d="M1 0.5v7l4-3.5z" fill="#181818"/></svg>
<div class="a" style="left:111px;top:553px;width:12px;height:12px;background:#cacaca"></div>
<div class="a" style="left:123px;top:103px;width:15px;height:462px;background:#d0d0d0"></div>
<div class="a" style="left:123px;top:103px;width:13px;height:347px;background:#c9c9c9"></div>
<div class="a" style="left:123px;top:103px;width:13px;height:173px;background:#c3c3c3"></div>
<div class="a" style="left:136px;top:103px;width:2px;height:173px;background:#d8d8d8"></div>
<svg style="left:126px;top:106px" width="6" height="8"><path d="M5 0.5v7l-4.5-3.5z" fill="#f8f8f8"/></svg>
<div class="a" style="left:138px;top:103px;width:151px;height:435px;background:#e2e2e2;border-right:1px solid #c8c8c8"></div>
<div class="a" style="left:139px;top:103px;width:149px;height:11px;background:linear-gradient(#e8e8e8,#dedede)"></div>
<div class="t" style="left:145.50px;top:104px;font-size:10.2px;color:#1a1a1a;transform:scaleX(0.7781);-webkit-text-stroke:0.05px currentColor;color:#202020">Variables a codificar</div>
<div class="a" style="left:140px;top:114px;width:147px;height:142px;background:#fff;border:1px solid #a8a8a8;border-right-color:#d0d0d0;border-bottom-color:#c4c4c4;box-shadow:inset 1px 1px 0 #dcdcdc"></div>
<div class="a" style="left:139px;top:256px;width:149px;height:8px;background:#e0e0e0"></div>
<div class="a" style="left:139px;top:264px;width:149px;height:12px;background:linear-gradient(#e2e2e2,#dedede);border-top:1px solid #d0d0d0"></div>
<div class="t" style="left:145.50px;top:266px;font-size:10.2px;color:#1a1a1a;transform:scaleX(0.7785);-webkit-text-stroke:0.05px currentColor;color:#202020">Variables relacionadas</div>
<div class="a" style="left:140px;top:276px;width:147px;height:180px;background:#fff;border:1px solid #a8a8a8;border-right-color:#d0d0d0;border-bottom-color:#c4c4c4;box-shadow:inset 1px 1px 0 #dcdcdc"></div>
<div class="a" style="left:139px;top:456px;width:148px;height:52px;background:#e6e6e6;border-top:4px solid #e2e2e2;border-bottom:1px solid #c0c0c0;box-shadow:inset 0 1px 0 #c4c4c4"></div>
<div class="a" style="left:139px;top:465px;width:149px;height:1px;background:#f0f0f0"></div>
<div class="a" style="left:144px;top:461px;width:81px;height:8px;background:#e6e6e6"></div>
<div class="t" style="left:145.50px;top:461px;font-size:10.2px;color:#1a1a1a;transform:scaleX(0.7818);-webkit-text-stroke:0.05px currentColor;color:#202020">Variable de referencia</div>
<div class="a" style="left:145px;top:477px;width:136px;height:15px;background:#fff;border:1px solid #b8b8b8;border-radius:2px"></div>
<div class="a" style="left:138px;top:508px;width:149px;height:30px;background:#efefef;border:1px solid #d8d8d8;border-bottom-color:#c4c4c4"></div>
<svg style="left:139px;top:516px" width="17" height="14" viewBox="0 0 17 14"><path d="M5 1 q-2 0 -2 2 v2.5 q0 1.5 -1.5 1.5 q1.5 0 1.5 1.5 v2.5 q0 2 2 2" stroke="#4050b0" fill="none" stroke-width="1.3"/><rect x="6" y="0.5" width="10" height="12.5" fill="#f4f4f4" stroke="#e4e0d8" stroke-width="0.6"/><path d="M7 2h8M7 5h8M7 8h8M7 11h8" stroke="#88b8ec" stroke-width="1.6"/><path d="M13.5 2h2M13.5 5h2M13.5 8h2M13.5 11h2" stroke="#3a78d0" stroke-width="1.6"/></svg>
<div class="t" style="left:157.00px;top:518px;font-size:10.2px;color:#1a1a1a;transform:scaleX(0.7907);">Seleccionar variables</div>
<div class="a" style="left:287px;top:103px;width:2px;height:435px;background:#bcbcbc"></div>
<div class="a" style="left:289px;top:103px;width:1px;height:435px;background:#f8f8f8"></div>
<div class="a" style="left:290px;top:103px;width:7px;height:435px;background:linear-gradient(90deg,#e8e8e8,#dcdcdc 50%,#cccccc 85%,#a8a8a8)"></div>
<div class="a" style="left:292px;top:308px;width:2px;height:2px;background:#303030;border-radius:1px"></div>
<div class="a" style="left:292px;top:311px;width:2px;height:2px;background:#303030;border-radius:1px"></div>
<div class="a" style="left:292px;top:314px;width:2px;height:2px;background:#303030;border-radius:1px"></div>
<div class="a" style="left:292px;top:317px;width:2px;height:2px;background:#303030;border-radius:1px"></div>
<div class="a" style="left:292px;top:320px;width:2px;height:2px;background:#303030;border-radius:1px"></div>
<div class="a" style="left:292px;top:323px;width:2px;height:2px;background:#303030;border-radius:1px"></div>
<div class="a" style="left:292px;top:326px;width:2px;height:2px;background:#303030;border-radius:1px"></div>
<div class="a" style="left:292px;top:329px;width:2px;height:2px;background:#303030;border-radius:1px"></div>
<div class="a" style="left:292px;top:332px;width:2px;height:2px;background:#303030;border-radius:1px"></div>
<div class="a" style="left:297px;top:103px;width:518px;height:435px;background:#fff;border-left:1px solid #7a7a7a;border-top:1px solid #9a9a9a;border-bottom:1px solid #8a8a8a;border-right:1px solid #b0b0b0"></div>
<div class="a" style="left:298px;top:104px;width:48px;height:14px;background:linear-gradient(#f4f4f4,#ececec 45%,#dedede 80%,#d4d4d4);border-right:1px solid #6e6e6e;border-bottom:1px solid #6e6e6e;box-shadow:inset 1px 1px 0 #fff"></div>
<div class="a" style="left:298px;top:118px;width:48px;height:14px;background:linear-gradient(#f4f4f4,#ececec 45%,#dedede 80%,#d4d4d4);border-right:1px solid #6e6e6e;border-bottom:1px solid #6e6e6e;box-shadow:inset 1px 1px 0 #fff"></div>
<div class="a" style="left:346px;top:104px;width:48px;height:14px;border-right:1px solid #7a7a7a;border-bottom:1px solid #7a7a7a;background:#fff"></div>
<div class="a" style="left:394px;top:104px;width:48px;height:14px;border-right:1px solid #7a7a7a;border-bottom:1px solid #7a7a7a;background:#fff"></div>
<div class="a" style="left:442px;top:104px;width:48px;height:14px;border-right:1px solid #7a7a7a;border-bottom:1px solid #7a7a7a;background:#fff"></div>
<div class="a" style="left:346px;top:118px;width:48px;height:14px;background:#a6c8ee;border-bottom:1px solid #7a7a7a"></div>
<div class="a" style="left:394px;top:118px;width:96px;height:14px;background:#c2dcc2;border-bottom:1px solid #b8c8b8"></div>
<div class="a" style="left:441px;top:118px;width:1px;height:14px;background:#b8ccb8"></div>
<div class="a" style="left:138px;top:538px;width:677px;height:28px;background:linear-gradient(#fcfcfc 0,#fcfcfc 8px,#efefef 8px,#efefef 18px,#e6e6e6 18px,#e6e6e6 23.5px,#e0e0e0 23.5px)"></div>
<div class="a" style="left:140px;top:542px;width:20px;height:20px;background:#f8f8f8;border:1px solid #e0e0e0;border-radius:3px"></div>
<div class="a" style="left:162px;top:542px;width:20px;height:20px;background:#f8f8f8;border:1px solid #e0e0e0;border-radius:3px"></div>
<div class="a" style="left:183px;top:542px;width:20px;height:20px;background:#f8f8f8;border:1px solid #e0e0e0;border-radius:3px"></div>
<svg style="left:144px;top:546px" width="13" height="13" viewBox="0 0 13 13"><circle cx="6.3" cy="6.6" r="5.6" fill="#5a5eaa" stroke="#7a8ad0" stroke-width="0.8"/><path d="M4.3 5 q0-2 2-2 q2 0 2 1.8 q0 1.2-1.5 1.8 q-0.5 0.3-0.5 1.3" stroke="#fff" fill="none" stroke-width="1.3"/><circle cx="6.3" cy="9.8" r="0.8" fill="#fff"/></svg>
<svg style="left:164px;top:546px" width="16" height="13" viewBox="0 0 16 13"><path d="M1 3 l8-2 l5 1 v9 l-13 1z" fill="#c8c080" stroke="#907050" stroke-width="0.8"/><path d="M2 8 l12 0.5 v3.5 l-12 0z" fill="#d82828"/><path d="M10 1.5l4 0.5v7" stroke="#c03030" fill="none"/></svg>
<svg style="left:186px;top:545px" width="14" height="14" viewBox="0 0 14 14"><rect x="0.8" y="0.8" width="12.4" height="12.4" fill="#6a98e8" stroke="#4a78d0"/><rect x="2.5" y="1.2" width="9" height="4.3" fill="#f8f8f8"/><rect x="2" y="7.5" width="10" height="5.5" fill="#fafafa"/><path d="M2.5 9.5h9M2.5 11h9" stroke="#e0e0e0" stroke-width="0.6"/><rect x="8.5" y="1.8" width="2" height="2.6" fill="#4a78d0"/></svg>
<svg style="left:208px;top:546px" width="17" height="16" viewBox="0 0 17 16"><rect x="0.5" y="0.5" width="15.5" height="15" fill="#f4f6fa" stroke="#7a90d8"/><path d="M3 8 q5.5-8 11 0" stroke="#d8c090" fill="none" stroke-width="1.3"/><path d="M3 8 q5.5-8 11 0" stroke="#d83030" fill="none" stroke-width="1.3" stroke-dasharray="1.2 1.6"/><text x="2.2" y="14.6" font-family="Liberation Sans" font-size="7.5" fill="#222">1</text><text x="9.2" y="14.6" font-family="Liberation Sans" font-size="7.5" fill="#222">A</text></svg>
<div class="t" style="left:300.60px;top:540px;font-size:10.2px;color:#1a1a1a;transform:scaleX(0.7900);-webkit-text-stroke:0.05px currentColor;color:#202020">Asignación</div>
<div class="a" style="left:300px;top:548px;width:86px;height:16px;background:#fff"></div>
<div class="t" style="left:302.70px;top:553px;font-size:10.2px;color:#1a1a1a;transform:scaleX(0.7907);-webkit-text-stroke:0.05px currentColor;color:#202020">Ver todos</div>
<div class="a" style="left:377px;top:551px;width:8px;height:12px;background:#c8c8c8"></div>
<svg style="left:378.5px;top:556px" width="5" height="3"><path d="M0 0h5l-2.5 3z" fill="#202020"/></svg>
<div class="a" style="left:471px;top:544px;width:23px;height:20px;background:#f6f6f6;border:1px solid #dcdcdc;border-radius:3px"></div>
<svg style="left:475px;top:547px" width="14" height="14" viewBox="0 0 14 14"><rect x="1" y="1" width="7" height="9" fill="#e8f0fa" stroke="#6a8ad0" stroke-width="0.8"/><rect x="5" y="4" width="8" height="9" fill="#f4f8ff" stroke="#6a8ad0" stroke-width="0.8"/><path d="M7 8h5M7 10h5" stroke="#4a7ad0" stroke-width="0.8"/></svg>
<div class="a" style="left:662px;top:547px;width:100px;height:14px;background:#fff"></div>
<div class="a" style="left:663px;top:549px;width:9px;height:9px;border:1px solid #505050;background:#fff"></div>
<div class="t" style="left:675.90px;top:550px;font-size:10.2px;color:#1a1a1a;transform:scaleX(0.7945);-webkit-text-stroke:0.05px currentColor;color:#202020">Diferenciar May/Min</div>
<div class="a" style="left:788px;top:543px;width:28px;height:20px;background:linear-gradient(#f4f4f4,#e8e8e8);border:1px solid #90b4cc;border-right:none;border-radius:3px 0 0 3px;box-shadow:inset 0 0 0 1px #d0e4f0"></div>
<svg style="left:794px;top:546px" width="16" height="13" viewBox="0 0 16 13"><path d="M1.5 6.5 l4 5 l9-10" stroke="#2a5a2a" fill="none" stroke-width="2.6" stroke-linejoin="round"/><path d="M1.8 6.6 l3.7 4.6 l8.8-9.7" stroke="#98d098" fill="none" stroke-width="1"/></svg>
<div class="t" style="left:810.00px;top:550px;font-size:10.2px;color:#1a1a1a;">A</div>
<div class="a" style="left:810px;top:559px;width:6px;height:1px;background:#1a1a1a"></div>
<div class="a" style="left:4px;top:566px;width:811px;height:19px;background:#d8d8d8"></div>
<div class="a" style="left:4px;top:565px;width:119px;height:1px;background:#d8d8d8"></div>
<div class="t" style="left:142.30px;top:569px;font-size:10.2px;color:#6a7488;transform:scaleX(0.8403);">Tabla devariables</div>
<div class="t" style="left:236.00px;top:569px;font-size:10.2px;color:#6a7488;transform:scaleX(0.8661);">Tabla dedatos</div>
<svg style="left:310px;top:565px" width="184" height="17"><path d="M2.5 1.5 H182 L177 16 H4.5 Q2.5 16 2.5 14z" fill="#ececec" stroke="#c8c8c8"/></svg>
<div class="t" style="left:318.60px;top:569px;font-size:10.2px;color:#4a5670;transform:scaleX(0.8034);">Codificación con variables relaconadas</div>
<div class="a" style="left:473px;top:567px;width:12px;height:12px;background:#f8f8f8;border:1px solid #d0d0d0;border-radius:2px"></div>
<svg style="left:475px;top:569px" width="8" height="8"><path d="M1 1l6 6M7 1l-6 6" stroke="#909090" stroke-width="1.6"/><path d="M1 1l6 6M7 1l-6 6" stroke="#f4f4f4" stroke-width="0.5"/></svg>
<div class="a" style="left:798px;top:567px;width:12px;height:12px;background:#f8f8f8;border:1px solid #d8d8d8;border-radius:2px"></div>
<svg style="left:800px;top:570px" width="8" height="6"><path d="M0.5 1.5 q1.5-2 3.5 0.5 q2-2.5 3.5-0.5 l-3.5 4z" fill="none" stroke="#404040" stroke-width="0.9"/></svg>
<div class="a" style="left:3px;top:585px;width:812px;height:2px;background:linear-gradient(#6a6a6a 50%,#9a9a9a 50%)"></div>
<div class="a" style="left:3px;top:587px;width:812px;height:16px;background:#d6d6d6"></div>
<div class="a" style="left:4px;top:587px;width:541px;height:15px;background:#d4d4d4;border-top:1px solid #a8a8a8;border-left:1px solid #b0b0b0;border-right:1px solid #f4f4f4;border-bottom:1px solid #f4f4f4;box-shadow:inset 1px 1px 0 #e0e0e0"></div>
<div class="a" style="left:546px;top:587px;width:81px;height:15px;background:#d4d4d4;border-top:1px solid #a8a8a8;border-left:1px solid #b0b0b0;border-right:1px solid #f4f4f4;border-bottom:1px solid #f4f4f4;box-shadow:inset 1px 1px 0 #e0e0e0"></div>
<div class="a" style="left:628px;top:587px;width:93px;height:15px;background:#d4d4d4;border-top:1px solid #a8a8a8;border-left:1px solid #b0b0b0;border-right:1px solid #f4f4f4;border-bottom:1px solid #f4f4f4;box-shadow:inset 1px 1px 0 #e0e0e0"></div>
<div class="a" style="left:722px;top:587px;width:91px;height:15px;background:#d4d4d4;border-top:1px solid #a8a8a8;border-left:1px solid #b0b0b0;border-right:1px solid #f4f4f4;border-bottom:1px solid #f4f4f4;box-shadow:inset 1px 1px 0 #e0e0e0"></div>
<div class="t" style="left:561.00px;top:591px;font-size:10.2px;color:#a8a878;transform:scaleX(0.8734);">Ponderación</div>
<div class="t" style="left:638.30px;top:591px;font-size:10.2px;color:#a0a088;transform:scaleX(0.8705);">Grupos de cálculo</div>
<div class="t" style="left:736.80px;top:591px;font-size:10.2px;color:#3a4480;transform:scaleX(0.9156);-webkit-text-stroke:0.4px #3a4480;">Sel 1226/1226</div>
</body></html>
